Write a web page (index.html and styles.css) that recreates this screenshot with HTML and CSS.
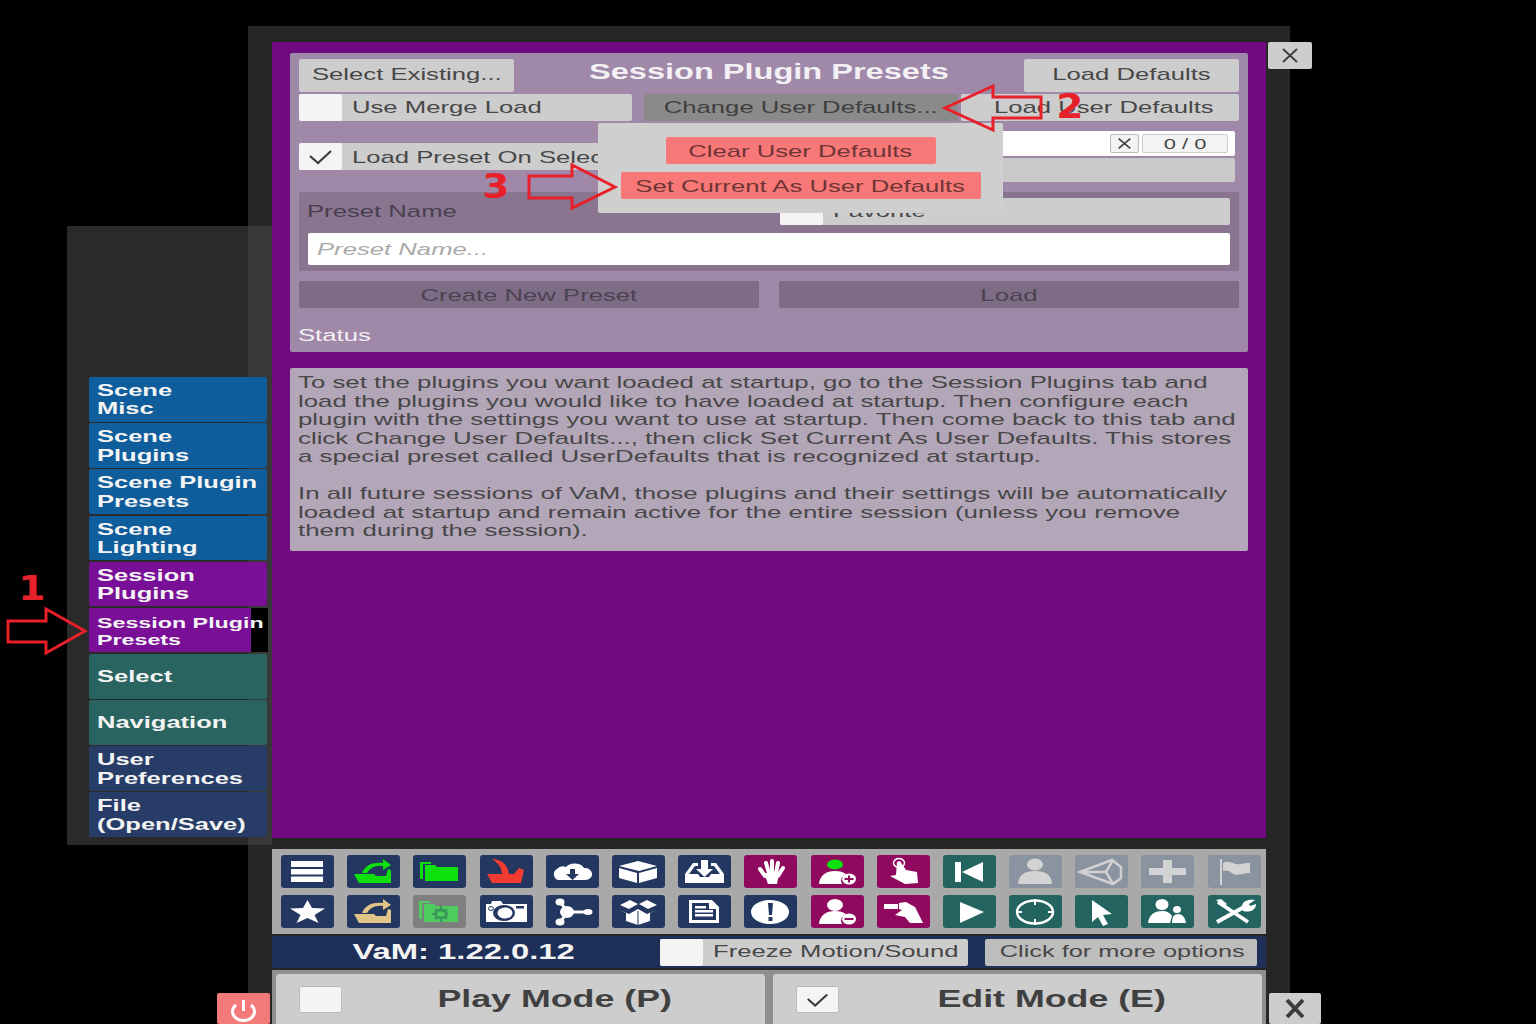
FILE: index.html
```html
<!DOCTYPE html>
<html lang="en">
<head>
<meta charset="utf-8">
<title>Session Plugin Presets</title>
<link rel="stylesheet" href="styles.css">
</head>
<body>
<div class="stage">
  <div class="backpanel"></div>

  <nav class="sidepanel">
    <div class="tab blue"><span class="tab-text">Scene<br>Misc</span></div>
    <div class="tab blue"><span class="tab-text">Scene<br>Plugins</span></div>
    <div class="tab blue"><span class="tab-text">Scene Plugin<br>Presets</span></div>
    <div class="tab blue"><span class="tab-text">Scene<br>Lighting</span></div>
    <div class="tab purple"><span class="tab-text">Session<br>Plugins</span></div>
    <div class="tab purple current"><span class="tab-text fit">Session Plugin<br>Presets</span></div>
    <div class="tab teal"><span class="tab-text">Select</span></div>
    <div class="tab teal"><span class="tab-text">Navigation</span></div>
    <div class="tab navy"><span class="tab-text">User<br>Preferences</span></div>
    <div class="tab navy"><span class="tab-text">File<br>(Open/Save)</span></div>
  </nav>

  <main class="main">
    <section class="card">
      <div class="row-title">
        <div class="btn"><span class="t">Select Existing...</span></div>
        <h1 class="title"><span class="t">Session Plugin Presets</span></h1>
        <div class="btn"><span class="t">Load Defaults</span></div>
      </div>
      <div class="row-actions">
        <div class="toggle"><div class="box"></div><div class="toggle-label"><span class="t tl">Use Merge Load</span></div></div>
        <div class="btn dark"><span class="t">Change User Defaults...</span></div>
        <div class="btn load-user"><span class="t">Load User Defaults</span></div>
      </div>
      <div class="row-filter">
        <div class="toggle filter-toggle">
          <div class="box"><svg class="check" viewBox="0 0 43 27"><path d="M11 13l8 7L32 8" /></svg></div>
          <div class="toggle-label"><span class="t tl">Load Preset On Select</span></div>
        </div>
        <div class="filter-right">
          <div class="search">
            <div class="search-x"><svg viewBox="0 0 29 19"><path d="M8 4l13 11M21 4L8 15" /></svg></div>
            <div class="search-count"><span class="t small">0 / 0</span></div>
          </div>
          <div class="filter-bar"></div>
        </div>
      </div>
      <div class="group">
        <div class="group-top">
          <div class="group-label"><span class="t tl">Preset Name</span></div>
          <div class="toggle"><div class="box fav"></div><div class="toggle-label"><span class="t tl">Favorite</span></div></div>
        </div>
        <div class="input"><span class="t tl">Preset Name...</span></div>
      </div>
      <div class="row-create">
        <div class="btn muted"><span class="t">Create New Preset</span></div>
        <div class="btn muted"><span class="t">Load</span></div>
      </div>
      <div class="status"><span class="t tl">Status</span></div>

      <div class="popup">
        <div class="btn red clear"><span class="t">Clear User Defaults</span></div>
        <div class="btn red set"><span class="t">Set Current As User Defaults</span></div>
      </div>
    </section>

    <section class="desc">
      <p class="desc-text">To set the plugins you want loaded at startup, go to the Session Plugins tab and<br>load the plugins you would like to have loaded at startup. Then configure each<br>plugin with the settings you want to use at startup. Then come back to this tab and<br>click Change User Defaults..., then click Set Current As User Defaults. This stores<br>a special preset called UserDefaults that is recognized at startup.<br><br>In all future sessions of VaM, those plugins and their settings will be automatically<br>loaded at startup and remain active for the entire session (unless you remove<br>them during the session).</p>
    </section>
  </main>

  <section class="bottom">
    <div class="toolbar">
      <div class="ic c-navy"><svg viewBox="0 0 53 33"><path d="M10 6h32v6H10zM10 14h32v5.500H10zM10 21.500h32V27H10z"/></svg></div>
      <div class="ic c-navy"><svg viewBox="0 0 53 33" fill="#0de00d"><path d="M7 19h20l2 2h10l2-7 3 1v13H12z"/><path d="M15 18c3-8 11-11 21-10V4l8 6-8 5v-4c-8-1-13 2-16 7z"/></svg></div>
      <div class="ic c-navy"><svg viewBox="0 0 53 33" fill="#0de00d"><path d="M7 7h11v2H10v15H7z"/><path d="M12 10h10l2 2h21v14H12z"/></svg></div>
      <div class="ic c-navy"><svg viewBox="0 0 53 33" fill="#f23c32"><path d="M12 4c8 0 16 5 17 15h5l5-6 5 2-3 13H12l-5-9h15c0-6-4-11-10-15z"/></svg></div>
      <div class="ic c-navy"><svg viewBox="0 0 53 33"><path d="M12 25a6 6 0 0 1-1-11 7 5 0 0 1 9-2 10 7 0 0 1 18 1 7 6 0 0 1 2 12z"/><path fill="#233760" d="M24 14h5v5h4l-6.500 6-6.500-6h4z"/></svg></div>
      <div class="ic c-navy"><svg viewBox="0 0 53 33"><path d="M26 6l19 5-18 5-20-5zM7 13l18 5v10L7 23zM27 18l18-5v10l-18 5z"/></svg></div>
      <div class="ic c-navy"><svg viewBox="0 0 53 33"><path d="M15 8h5v3h-3l-6 8h9l2 3h9l2-3h9l-6-8h-3V8h5l8 11v9H7v-9z"/><path d="M23 5h7v9h5l-8.500 8-8.500-8h5z"/></svg></div>
      <div class="ic c-mag"><svg viewBox="0 0 53 33"><path d="M16 14l5 7M22 8l3 10M28 6v12M34 8l-2 10M39 13l-5 8" stroke="#fff" stroke-width="4" stroke-linecap="round" fill="none"/><path d="M20 18h15l-2 11H24z"/></svg></div>
      <div class="ic c-mag"><svg viewBox="0 0 53 33"><ellipse cx="24" cy="9.500" rx="8" ry="5" fill="#0de00d"/><path d="M8 29c1-9 7-13 16-13 5 0 8 1 11 3a8 7 0 0 0-4 10z"/><ellipse cx="38" cy="24" rx="7" ry="5.500"/><path fill="#8f0a5e" d="M37 20.500h2V23h3.500v2H39v2.500h-2V25h-3.500v-2H37z"/></svg></div>
      <div class="ic c-mag"><svg viewBox="0 0 53 33"><ellipse cx="22" cy="8" rx="5.500" ry="4.500" fill="none" stroke="#fff" stroke-width="1.500"/><path d="M20 7l3-1 6 9 11 2 1 11-13 1-15-8 6-1z"/></svg></div>
      <div class="ic c-teal"><svg viewBox="0 0 53 33"><path d="M12 7h6v20h-6zM40 7v20L19 17z"/></svg></div>
      <div class="ic c-gray"><svg viewBox="0 0 53 33"><ellipse cx="26" cy="9.500" rx="8" ry="6"/><path d="M9 29c1-10 7-13 17-13s16 3 17 13z"/></svg></div>
      <div class="ic c-gray"><svg viewBox="0 0 53 33"><path d="M5 17L37 5l9 7v11l-8 6zM5 17h26l7-12M31 17l7 12" fill="none" stroke="#d0d0d0" stroke-width="2.500"/></svg></div>
      <div class="ic c-gray"><svg viewBox="0 0 53 33"><path d="M8 13h14V5h9v8h14v7H31v8h-9v-8H8z"/></svg></div>
      <div class="ic c-gray"><svg viewBox="0 0 53 33"><path d="M12 4h2v26h-2z"/><path d="M15 8c7-4 11 3 18 1 3-1 6-1 9-1v10c-8 0-14 4-18 0-4-3-6-3-9-2z"/></svg></div>

      <div class="ic c-navy"><svg viewBox="0 0 53 33"><path d="M26.500 5l4.500 8 13 .5-10.500 6.500 4 8-11-5-11 5 4-8L9 13.500l13-.5z"/></svg></div>
      <div class="ic c-navy"><svg viewBox="0 0 53 33" fill="#e0c488"><path d="M7 19h20l2 2h10l2-7 3 1v13H12z"/><path d="M15 18c3-8 11-11 21-10V4l8 6-8 5v-4c-8-1-13 2-16 7z"/></svg></div>
      <div class="ic c-dim"><svg viewBox="0 0 53 33" fill="#4fcc5f"><path d="M6 6h11v2H9v16H6z"/><path d="M11 9h10l2 2h22v16H11z"/><ellipse cx="28" cy="19" rx="5.500" ry="4" fill="none" stroke="#38985a" stroke-width="3"/><path d="M28 11v16M19 19h18M22 14l12 10M34 14L22 24" stroke="#38985a" stroke-width="2" stroke-dasharray="3 10"/></svg></div>
      <div class="ic c-navy"><svg viewBox="0 0 53 33"><path d="M6 9h5l1-3h9l2 3h24v18H6z"/><ellipse cx="24" cy="18" rx="11" ry="8" fill="#233760"/><ellipse cx="25" cy="18" rx="7.500" ry="5.500"/><ellipse cx="11" cy="13.500" rx="2.500" ry="2" fill="#fff" stroke="#233760"/><rect x="36" y="11" width="8" height="2.500" fill="#233760"/></svg></div>
      <div class="ic c-navy"><svg viewBox="0 0 53 33"><path d="M14 7l8 10h20M22 17L14 27" fill="none" stroke="#fff" stroke-width="3"/><ellipse cx="21" cy="17" rx="7" ry="6"/><ellipse cx="14" cy="7" rx="4.500" ry="3.500"/><ellipse cx="42" cy="17" rx="4.500" ry="3"/><ellipse cx="14" cy="27" rx="4.500" ry="3.500"/></svg></div>
      <div class="ic c-navy"><svg viewBox="0 0 53 33"><path d="M8 10l10-5 8 4-9 5zM45 10L35 5l-8 4 9 5zM8 15l9 4 9-5 9 5 9-4-6 3v8l-12 4-12-4v-8z"/><path d="M26 16v14" stroke="#233760"/></svg></div>
      <div class="ic c-navy"><svg viewBox="0 0 53 33"><path fill-rule="evenodd" d="M11 5h23l7 7v16H11zM14 8v17h24V14h-7V8z"/><path d="M17 11h11v2.500H17zM17 15h18v2.500H17zM17 19h18v2.500H17z"/></svg></div>
      <div class="ic c-navy"><svg viewBox="0 0 53 33"><ellipse cx="26" cy="17" rx="19" ry="12"/><path fill="#233760" d="M24 8h5l-1 12h-3zM24.500 22h4v4h-4z"/></svg></div>
      <div class="ic c-mag"><svg viewBox="0 0 53 33"><ellipse cx="24" cy="10" rx="8" ry="6"/><path d="M8 29c1-9 7-13 16-13 5 0 8 1 11 3a8 7 0 0 0-4 10z"/><ellipse cx="38" cy="24" rx="7" ry="5.500"/><rect x="33.500" y="23" width="9" height="2" fill="#8f0a5e"/></svg></div>
      <div class="ic c-mag"><svg viewBox="0 0 53 33"><path d="M7 9h14v5H7z"/><path d="M22 8l7-1 9 5 8 16H33l-5-6-10-2 7-5-3-1z"/></svg></div>
      <div class="ic c-teal"><svg viewBox="0 0 53 33"><path d="M17 7l24 10-24 11z"/></svg></div>
      <div class="ic c-teal"><svg viewBox="0 0 53 33"><ellipse cx="26" cy="17" rx="18" ry="11.500" fill="none" stroke="#fff" stroke-width="2.500"/><path d="M26 4v6M26 24v6M7 17h6M39 17h6" stroke="#fff" stroke-width="2"/></svg></div>
      <div class="ic c-teal"><svg viewBox="0 0 53 33"><path d="M17 5l20 14-9 1 5 9-5 2-5-9-6 5z"/></svg></div>
      <div class="ic c-teal"><svg viewBox="0 0 53 33"><ellipse cx="21" cy="9.500" rx="6.500" ry="5.500"/><path d="M7 28c1-8 6-12 14-12 5 0 8 2 10 5l-2 7z"/><ellipse cx="36" cy="14.500" rx="4" ry="3.500"/><path d="M31 28c0-6 2-9 6-9s7 3 8 9z"/></svg></div>
      <div class="ic c-teal"><svg viewBox="0 0 53 33"><path d="M10 7l30 20" stroke="#fff" stroke-width="3.500" fill="none"/><path d="M8 5l5-1 6 5-3 3z"/><path d="M9 27l27-15" stroke="#fff" stroke-width="4" fill="none"/><path d="M34 12c0-6 6-8 13-7l-6 4 1 2 6-2c0 6-6 9-13 7z"/></svg></div>
    </div>

    <div class="statusbar">
      <div class="version"><span class="t">VaM: 1.22.0.12</span></div>
      <div class="toggle freeze"><div class="box"></div><div class="toggle-label"><span class="t tl">Freeze Motion/Sound</span></div></div>
      <div class="btn more"><span class="t">Click for more options</span></div>
    </div>

    <div class="modes">
      <div class="mode"><div class="box mode-box"></div><div class="mode-label"><span class="t">Play Mode (P)</span></div></div>
      <div class="mode"><div class="box mode-box"><svg class="check" viewBox="0 0 43 27"><path d="M11 13l8 7L32 8" /></svg></div><div class="mode-label"><span class="t">Edit Mode (E)</span></div></div>
    </div>
  </section>

  <div class="close-top"><svg viewBox="0 0 44 27"><path d="M15 7l14 13M29 7L15 20" /></svg></div>
  <div class="close-bottom"><svg viewBox="0 0 52 31"><path d="M18 7l16 17M34 7L18 24" /></svg></div>
  <div class="power"><svg viewBox="0 0 53 31"><path d="M19 12a11 9 0 1 0 15 0" /><path d="M26.500 7v11" /></svg></div>

  <svg class="arrows" viewBox="0 0 1536 1024">
    <polygon points="85,631 46,609 46,621 8,621 8,642 46,642 46,653" />
    <polygon points="945,108 993,86 993,97 1041,97 1041,118 993,118 993,130" />
    <polygon points="615,187 572,165 572,176 529,176 529,198 572,198 572,208" />
  </svg>
  <div class="num num1">1</div>
  <div class="num num2">2</div>
  <div class="num num3">3</div>
</div>
</body>
</html>
```

FILE: styles.css
```css
* { box-sizing: border-box; }
html, body { margin: 0; padding: 0; background: #000; }
body { font-family: "Liberation Sans", Arial, sans-serif; font-size: 17px; color: #474747; }
.stage { position: relative; width: 1536px; height: 1024px; overflow: hidden; background: #000; }

/* stretched world-space text */
.t { display: inline-block; white-space: nowrap; transform: scaleX(1.51); transform-origin: center; }
.tl { transform-origin: left center; }
.small { font-size: 14.5px; }

.backpanel { position: absolute; left: 248px; top: 26px; width: 1042px; height: 998px; background: #262626; }

.sidepanel {
  position: absolute; left: 67px; top: 226px; width: 205px; height: 619px;
  background: rgba(67, 67, 67, .63);
  display: flex; flex-direction: column; justify-content: flex-end; gap: 1.5px;
  padding: 0 0 8px 22px;
}
.tab { position: relative; width: 178px; height: 44.65px; border-radius: 2px; display: flex; align-items: center; padding: 2px 0 0 8px; color: #f4f4f4; font-weight: 700; line-height: 18.3px; }
.tab-text { position: relative; z-index: 1; display: block; white-space: nowrap; transform: scaleX(1.5); transform-origin: left center; }
.fit { font-size: 15.5px; line-height: 17.5px; }
.blue { background: #0f5d9b; }
.purple { background: #790f97; }
.teal { background: #2a6460; }
.navy { background: #273c66; }
.current::after { content: ""; position: absolute; right: -1px; top: 0; bottom: 0; width: 17px; background: #000; }

.main { position: absolute; left: 272px; top: 42px; width: 994px; height: 796px; background: #6f0a80; padding: 11px 18px 0; display: flex; flex-direction: column; gap: 16px; }

.card { position: relative; height: 299px; background: #9f88a8; border-radius: 2px; padding: 6px 9px; display: flex; flex-direction: column; }
.card > * { flex: none; }

.btn { display: flex; align-items: center; justify-content: center; background: #cdcdcd; border-radius: 2px; height: 100%; }
.dark { background: #8a8a8a; color: #3f3f3f; }
.load-user { padding-left: 7px; }
.muted { background: #7e6b85; color: #4b4250; }
.red { background: #f87878; color: #6e3535; height: 27px; }
.red .t, .muted .t, .input .t, .filter-toggle .t { padding-top: 2px; }

.row-title { height: 25px; display: grid; grid-template-columns: 215px 1fr 215px; align-items: center; }
.row-title .btn .t { padding-bottom: 2px; }
.title { margin: 0 0 8px; text-align: center; color: #f3f0f4; font-size: 21.7px; font-weight: 700; line-height: 25px; }
.title .t { transform: scaleX(1.5); }
.row-actions { height: 27px; margin-top: 10px; display: grid; grid-template-columns: 345px 317px 278px; }
.row-actions > :nth-child(1) { margin-right: 12px; }
.row-actions > :nth-child(2) { margin-right: 3px; }

.toggle { display: flex; height: 27px; background: #cdcdcd; border-radius: 2px; }
.box { width: 43px; flex: none; background: #f4f4f4; border-radius: 2px; }
.toggle-label { flex: 1; display: flex; align-items: center; padding-left: 10px; overflow: hidden; }
.check { display: block; width: 100%; height: 100%; fill: none; stroke: #3c3c3c; stroke-width: 2.2; }

.row-filter { height: 51px; margin-top: 10px; display: grid; grid-template-columns: 461px 456px; column-gap: 19px; }
.filter-toggle { margin-top: 12px; }
.filter-right { display: flex; flex-direction: column; gap: 2px; }
.search { height: 25px; background: #fff; border-radius: 2px; display: flex; justify-content: flex-end; align-items: center; gap: 3px; padding-right: 7px; }
.search-x { width: 29px; height: 19px; background: #f3f3f3; border: 1px solid #bbb; border-radius: 2px; }
.search-x svg { display: block; width: 100%; height: 100%; fill: none; stroke: #3c3c3c; stroke-width: 1.8; }
.search-count { width: 86px; height: 19px; background: #f3f3f3; border: 1px solid #ccc; border-radius: 2px; display: flex; align-items: center; justify-content: center; }
.filter-bar { height: 24px; background: #c9c9c9; border-radius: 2px; }

.group { height: 79px; margin-top: 10px; background: #8a7591; padding: 6px 9px; display: flex; flex-direction: column; gap: 8px; border-radius: 2px; }
.group-top { height: 27px; display: grid; grid-template-columns: 472px 450px; align-items: center; }
.group-label { color: #49404f; margin-left: -1px; }
.input { height: 32px; background: #fff; border-radius: 2px; display: flex; align-items: center; padding-left: 9px; color: #a9a9a9; font-style: italic; }

.row-create { height: 27px; margin-top: 10px; display: grid; grid-template-columns: 460px 460px; column-gap: 20px; }
.status { height: 20px; margin-top: 18px; margin-left: -1px; color: #f2f0f3; line-height: 20px; }

.popup { position: absolute; left: 308px; top: 70px; width: 405px; height: 90px; background: #cfcfcf; border-radius: 2px; display: flex; flex-direction: column; align-items: center; gap: 8px; padding-top: 14px; }
.clear { width: 270px; flex: none; }
.set { width: 360px; flex: none; }

.desc { height: 183px; background: #b3a6b8; border-radius: 2px; padding: 6px 8px; overflow: hidden; }
.desc-text { margin: 0; white-space: nowrap; line-height: 18.5px; color: #474747; transform: scaleX(1.518); transform-origin: left top; }

.bottom { position: absolute; left: 272px; top: 849px; width: 994px; display: flex; flex-direction: column; gap: 2px; }
.toolbar { height: 85px; background: #a9a9a9; padding: 6px 9px; display: grid; grid-template-columns: repeat(15, 53px); grid-auto-rows: 33px; gap: 7px 13.2px; }
.ic { border-radius: 3px; fill: #fff; }
.ic svg { display: block; width: 53px; height: 33px; }
.c-navy { background: #233760; }
.c-mag { background: #8f0a5e; }
.c-teal { background: #236460; }
.c-gray { background: #8a93a0; fill: #d3d3d3; }
.c-dim { background: #7f7f7f; }

.statusbar { height: 32px; background: #1f3058; display: grid; grid-template-columns: 388px 325px 272px; align-items: center; }
.version { color: #f4f4f4; font-size: 22px; font-weight: 700; text-align: center; padding-right: 5px; }
.version .t { transform: scaleX(1.49); }
.freeze { margin-right: 17px; }
.more { height: 27px; background: #bdbdbd; padding-left: 3px; }
.more .t { transform: scaleX(1.49); }

.modes { height: 54px; background: #8f8f8f; display: grid; grid-template-columns: 489px 489px; column-gap: 8px; padding: 4px 4px 0; }
.mode { background: #cdcdcd; border-radius: 3px; display: flex; align-items: center; height: 62px; padding: 0 0 12px 23px; font-size: 24px; font-weight: 700; color: #404040; }
.mode-box { height: 27px; border: 1px solid #bbb; }
.mode-label { flex: 1; text-align: center; padding-left: 2px; }
.mode-label .t { transform: scaleX(1.49); }

.close-top { position: absolute; left: 1268px; top: 42px; width: 44px; height: 27px; background: #cdcdcd; border-radius: 2px; }
.close-top svg { display: block; fill: none; stroke: #3c3c3c; stroke-width: 1.8; }
.close-bottom { position: absolute; left: 1269px; top: 993px; width: 52px; height: 31px; background: #cdcdcd; border-radius: 2px; }
.close-bottom svg { display: block; fill: none; stroke: #3c3c3c; stroke-width: 4; }
.power { position: absolute; left: 217px; top: 993px; width: 53px; height: 31px; background: #f47a7a; border-radius: 2px; }
.power svg { display: block; fill: none; stroke: #fff; stroke-width: 3; }

.arrows { position: absolute; left: 0; top: 0; width: 1536px; height: 1024px; fill: none; stroke: #e8202a; stroke-width: 3; pointer-events: none; }
.num { position: absolute; color: #e8202a; font-family: "DejaVu Sans", sans-serif; font-weight: 700; font-size: 34px; line-height: 34px; transform: scaleX(1.15); }
.num1 { left: 20px; top: 571px; }
.num2 { left: 1058px; top: 89px; }
.num3 { left: 484px; top: 169px; }
```
